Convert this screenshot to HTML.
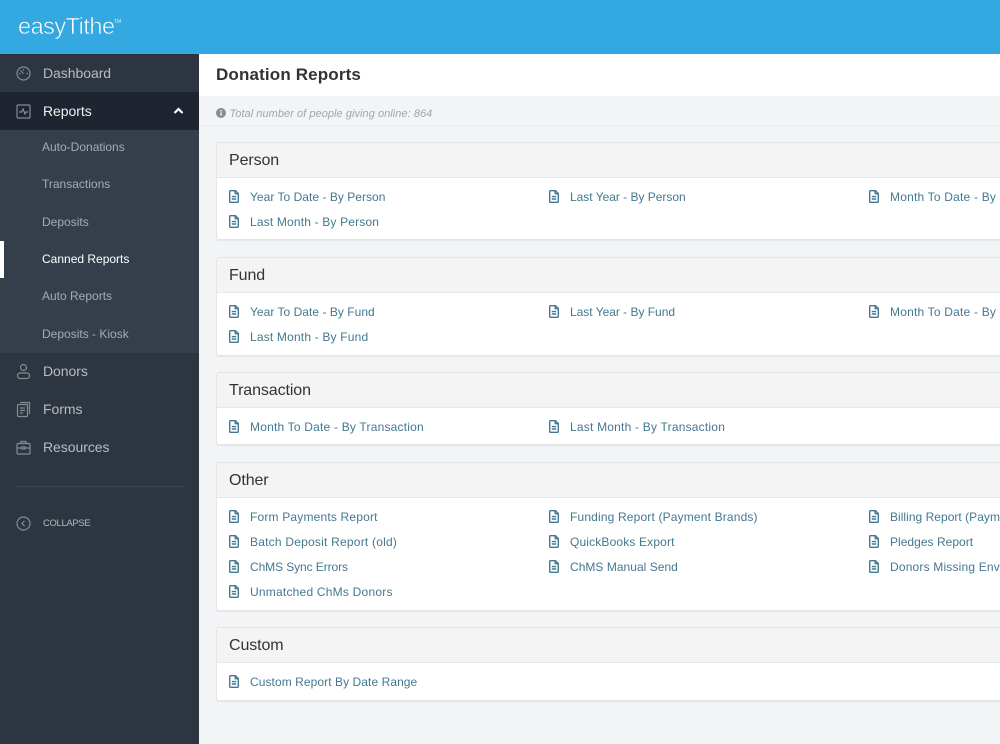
<!DOCTYPE html>
<html><head><meta charset="utf-8">
<style>
*{box-sizing:border-box}
html,body{margin:0;padding:0;width:1000px;height:744px;overflow:hidden;background:#f3f4f6;font-family:"Liberation Sans",sans-serif}
.abs,.t,.l,svg.ic,svg.d{position:absolute}
#top{left:0;top:0;width:1000px;height:54px;background:#34a9e1}
#logo{position:absolute;left:18px;top:8px;font-size:23.500px;color:#fff;line-height:36px;letter-spacing:-.5px;-webkit-text-stroke:.6px #34a9e1}
#tm{position:absolute;left:114px;top:19px;font-size:5px;line-height:6px;color:#d5eefa}
#side{left:0;top:54px;width:199px;height:690px;background:#2d3540}
.t{white-space:nowrap;line-height:20px}
.m{left:43px;font-size:14px;color:#b9bdc2;letter-spacing:-.05px}
.s{left:42px;font-size:12px;color:#a5abb3}
svg.ic{left:15px;width:17px;height:17px;fill:none;stroke:#858b93;stroke-width:1.2}
.card{position:absolute;left:216px;width:784px;background:#fff;border:1px solid #e4e5e7;border-right:none;border-radius:3px 0 0 3px;box-shadow:0 1px 1px rgba(0,0,0,.06)}
.card .h{height:35px;background:#f4f4f5;border-bottom:1px solid #e6e7e8;padding-left:12px;font-size:16px;line-height:36px;color:#333;letter-spacing:-.1px}
.l{font-size:12px;line-height:20px;color:#44788f;white-space:nowrap;letter-spacing:.03px}
.r{width:110px;overflow:hidden}
svg.d{width:10px;height:13px;fill:none;stroke:#44788f;stroke-width:1.4;stroke-linejoin:round}
</style></head><body>
<div id="top" class="abs"><div id="logo">easyTithe</div><div id="tm">TM</div></div>
<div id="side" class="abs"></div>
<div class="abs" style="left:0;top:92px;width:199px;height:38px;background:#1f2530"></div>
<div class="abs" style="left:0;top:130px;width:199px;height:223px;background:#353f4c"></div>
<div class="abs" style="left:0;top:241px;width:4px;height:37px;background:#fff"></div>
<svg class="ic" style="top:65px" viewBox="0 0 17 17"><circle cx="8.500" cy="8.500" r="6.500"/><path d="M8.500 8.500 5.500 5.500M4 8.500h1.500M11.500 8.500H13M8.500 4v1.500"/></svg>
<div class="t m" style="top:63px">Dashboard</div>
<svg class="ic" style="top:103px" viewBox="0 0 17 17"><rect x="2" y="2" width="13" height="13" rx="1"/><path d="M4 9h2.500l1.500-3 2 5 1-2h2"/></svg>
<div class="t m" style="top:101px;color:#eef0f2">Reports</div>
<svg class="abs" style="left:173px;top:107px;position:absolute" width="11" height="8" viewBox="0 0 11 8"><path d="M1.500 6 5.500 2l4 4" fill="none" stroke="#fff" stroke-width="2.200"/></svg>
<div class="t s" style="top:137px">Auto-Donations</div>
<div class="t s" style="top:174px">Transactions</div>
<div class="t s" style="top:212px">Deposits</div>
<div class="t s" style="top:249px;color:#fff">Canned Reports</div>
<div class="t s" style="top:286px">Auto Reports</div>
<div class="t s" style="top:324px">Deposits - Kiosk</div>
<svg class="ic" style="top:363px" viewBox="0 0 17 17"><circle cx="8.500" cy="4.500" r="3"/><rect x="2.500" y="10" width="12" height="5.500" rx="2.500"/></svg>
<div class="t m" style="top:361px">Donors</div>
<svg class="ic" style="top:401px" viewBox="0 0 17 17"><rect x="2.500" y="3.500" width="10" height="12" rx="1"/><path d="M5 1.500h9.500v11.500M5 7h5M5 9.500h5M5 12h3"/></svg>
<div class="t m" style="top:399px">Forms</div>
<svg class="ic" style="top:439px" viewBox="0 0 17 17"><rect x="2" y="4.500" width="13" height="10.500" rx="1"/><path d="M6 4.500V2.500h5v2M2 9h5M10 9h5M7 8h3v2H7z"/></svg>
<div class="t m" style="top:437px">Resources</div>
<div class="abs" style="left:15px;top:486px;width:169px;height:1px;background:#3a434f"></div>
<svg class="ic" style="top:515px" viewBox="0 0 17 17"><circle cx="8.500" cy="8.500" r="6.500"/><path d="M9.500 6 7 8.500 9.500 11"/></svg>
<div class="t" style="left:43px;top:514px;font-size:9.500px;letter-spacing:-.35px;color:#b4b8bd">COLLAPSE</div>

<div class="abs" style="left:199px;top:54px;width:801px;height:42px;background:#fff"></div>
<div class="t" style="left:216px;top:65px;font-size:17px;font-weight:bold;color:#2f3338;letter-spacing:.15px">Donation Reports</div>
<div class="abs" style="left:199px;top:125px;width:801px;height:1px;background:#e9eaec"></div>
<svg class="abs" style="left:216px;top:108px;position:absolute" width="10" height="10" viewBox="0 0 10 10"><circle cx="5" cy="5" r="5" fill="#8a8d91"/><path d="M5 4.500v3M5 2v1.500" stroke="#fff" stroke-width="1.300"/></svg>
<div class="t" style="left:229.500px;top:103.500px;font-size:11px;font-style:italic;color:#a2a5a9;letter-spacing:.05px">Total number of people giving online: 864</div>

<div class="card" style="top:142px;height:98px"><div class="h">Person</div></div>
<div class="card" style="top:257px;height:99px"><div class="h">Fund</div></div>
<div class="card" style="top:372px;height:73px"><div class="h">Transaction</div></div>
<div class="card" style="top:462px;height:149px"><div class="h">Other</div></div>
<div class="card" style="top:627px;height:74px"><div class="h">Custom</div></div>

<svg width="0" height="0" style="position:absolute"><defs><g id="doc"><path d="M.7 1.600Q.7.700 1.600.700h4.900l2.800 2.800v7.900q0 .9-.9.9H1.600q-.9 0-.9-.9zM6.200.7v3h3M2.800 6.600h4.400M2.800 9h4.400"/></g></defs></svg>

<svg class="d" style="left:229px;top:190px"><use href="#doc"/></svg><div class="l" style="left:250px;top:187px">Year To Date - By Person</div>
<svg class="d" style="left:549px;top:190px"><use href="#doc"/></svg><div class="l" style="left:570px;top:187px;letter-spacing:-.02px">Last Year - By Person</div>
<svg class="d" style="left:869px;top:190px"><use href="#doc"/></svg><div class="l r" style="left:890px;top:187px;width:108px;letter-spacing:.2px">Month To Date - By Person</div>
<svg class="d" style="left:229px;top:215px"><use href="#doc"/></svg><div class="l" style="left:250px;top:212px;letter-spacing:.17px">Last Month - By Person</div>

<svg class="d" style="left:229px;top:305px"><use href="#doc"/></svg><div class="l" style="left:250px;top:302px">Year To Date - By Fund</div>
<svg class="d" style="left:549px;top:305px"><use href="#doc"/></svg><div class="l" style="left:570px;top:302px;letter-spacing:-.02px">Last Year - By Fund</div>
<svg class="d" style="left:869px;top:305px"><use href="#doc"/></svg><div class="l r" style="left:890px;top:302px;width:108px;letter-spacing:.2px">Month To Date - By Fund</div>
<svg class="d" style="left:229px;top:330px"><use href="#doc"/></svg><div class="l" style="left:250px;top:327px;letter-spacing:.18px">Last Month - By Fund</div>

<svg class="d" style="left:229px;top:420px"><use href="#doc"/></svg><div class="l" style="left:250px;top:417px;letter-spacing:.2px">Month To Date - By Transaction</div>
<svg class="d" style="left:549px;top:420px"><use href="#doc"/></svg><div class="l" style="left:570px;top:417px;letter-spacing:.21px">Last Month - By Transaction</div>

<svg class="d" style="left:229px;top:510px"><use href="#doc"/></svg><div class="l" style="left:250px;top:507px;letter-spacing:.18px">Form Payments Report</div>
<svg class="d" style="left:549px;top:510px"><use href="#doc"/></svg><div class="l" style="left:570px;top:507px;letter-spacing:.16px">Funding Report (Payment Brands)</div>
<svg class="d" style="left:869px;top:510px"><use href="#doc"/></svg><div class="l r" style="left:890px;top:507px">Billing Report (Payment Brands)</div>
<svg class="d" style="left:229px;top:535px"><use href="#doc"/></svg><div class="l" style="left:250px;top:532px;letter-spacing:.22px">Batch Deposit Report (old)</div>
<svg class="d" style="left:549px;top:535px"><use href="#doc"/></svg><div class="l" style="left:570px;top:532px;letter-spacing:.15px">QuickBooks Export</div>
<svg class="d" style="left:869px;top:535px"><use href="#doc"/></svg><div class="l r" style="left:890px;top:532px">Pledges Report</div>
<svg class="d" style="left:229px;top:560px"><use href="#doc"/></svg><div class="l" style="left:250px;top:557px;letter-spacing:-.09px">ChMS Sync Errors</div>
<svg class="d" style="left:549px;top:560px"><use href="#doc"/></svg><div class="l" style="left:570px;top:557px">ChMS Manual Send</div>
<svg class="d" style="left:869px;top:560px"><use href="#doc"/></svg><div class="l r" style="left:890px;top:557px;letter-spacing:.18px">Donors Missing Envelope</div>
<svg class="d" style="left:229px;top:585px"><use href="#doc"/></svg><div class="l" style="left:250px;top:582px;letter-spacing:.22px">Unmatched ChMs Donors</div>

<svg class="d" style="left:229px;top:675px"><use href="#doc"/></svg><div class="l" style="left:250px;top:672px;letter-spacing:.07px">Custom Report By Date Range</div>
</body></html>
